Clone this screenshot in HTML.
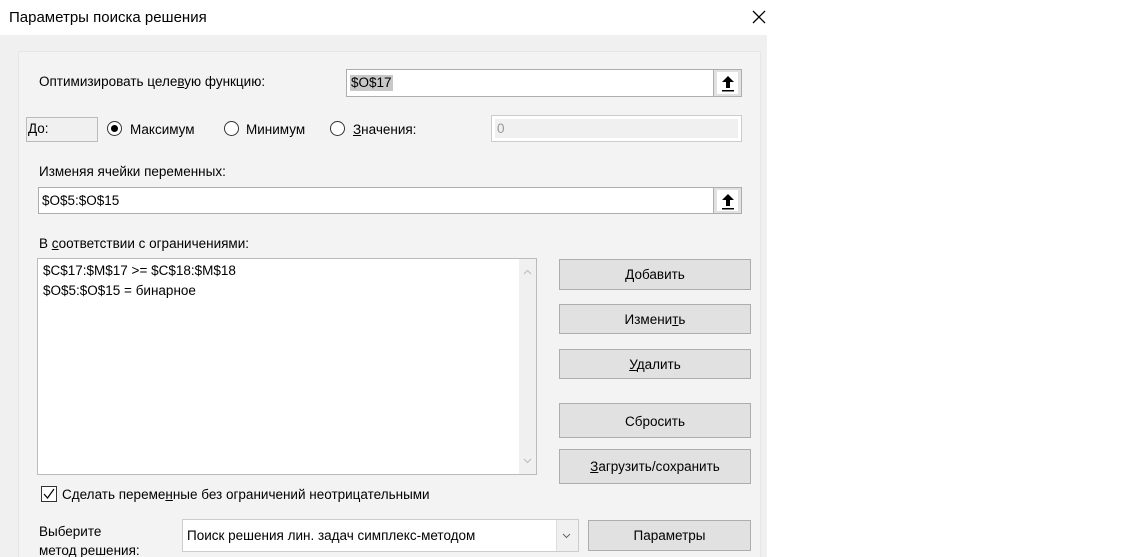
<!DOCTYPE html>
<html><head><meta charset="utf-8"><style>
*{box-sizing:border-box;margin:0;padding:0}
html{overflow:hidden;width:1124px;height:557px}
body{width:1124px;height:557px;background:#fff;position:relative;overflow:hidden;font-family:"Liberation Sans",sans-serif;font-size:13.5px;color:#000}
.a{position:absolute}
.t{position:absolute;white-space:nowrap;line-height:16px}
.inp{position:absolute;background:#fff;border:1px solid #adadad}
.btn{position:absolute;background:#e1e1e1;border:1px solid #adadad;text-align:center}
.up{position:absolute;background:#e1e1e1;border-left:1px solid #adadad;top:0;right:0;bottom:0;width:28px}
.up div{position:absolute;left:3px;top:2px;right:3px;bottom:2px;background:#fff}
.rad{position:absolute;width:15px;height:15px;border:1px solid #333;border-radius:50%;background:#fff}
u{text-decoration:underline}
</style></head><body>
<div class="t" style="left:9px;top:10px;font-size:15px">Параметры поиска решения</div>
<svg class="a" style="left:752px;top:10px" width="14" height="14"><path d="M1 1L13 13M13 1L1 13" stroke="#000" stroke-width="1.3"/></svg>
<div class="a" style="left:0;top:35px;width:767px;height:522px;background:#f0f0f0"></div>
<div class="a" style="left:18px;top:51px;width:743px;height:506px;border:1px solid #e6e6e6;border-bottom:none;background:#f3f3f3"></div>

<div class="t" style="left:39px;top:74px">Оптимизировать целе<u>в</u>ую функцию:</div>
<div class="inp" style="left:346px;top:69px;width:396px;height:28px">
<span class="t" style="left:3px;top:5px;background:#c8c8c8;padding:0 1px">$O$17</span>
<div class="up"><div><svg width="22" height="22" style="position:absolute;left:0;top:0"><path d="M11 4L5 10H9V16H13V10H17Z" fill="#000"/><rect x="5" y="18" width="12" height="1.5" fill="#000"/></svg></div></div></div>

<div class="a" style="left:26px;top:117px;width:72px;height:25px;border:1px solid #bbb;background:#f0f0f0"></div>
<div class="t" style="left:28px;top:121px">До:</div>
<div class="rad" style="left:107px;top:121px"><div style="position:absolute;left:3px;top:3px;width:7px;height:7px;border-radius:50%;background:#000"></div></div>
<div class="t" style="left:130px;top:122px">Максимум</div>
<div class="rad" style="left:224px;top:121px"></div>
<div class="t" style="left:246px;top:122px">Минимум</div>
<div class="rad" style="left:330px;top:121px"></div>
<div class="t" style="left:353px;top:122px"><u>З</u>начения:</div>
<div class="inp" style="left:491px;top:115px;width:251px;height:27px;border-color:#ccc"><div class="a" style="left:3px;top:3px;right:3px;bottom:3px;background:#f0f0f0"></div><span class="t" style="left:5px;top:5px;color:#999">0</span></div>

<div class="t" style="left:39px;top:164px">Изменяя ячейки переменных:</div>
<div class="inp" style="left:38px;top:187px;width:704px;height:27px">
<span class="t" style="left:3px;top:5px">$O$5:$O$15</span>
<div class="up"><div><svg width="22" height="22" style="position:absolute;left:0;top:0"><path d="M11 4L5 10H9V16H13V10H17Z" fill="#000"/><rect x="5" y="18" width="12" height="1.5" fill="#000"/></svg></div></div></div>

<div class="t" style="left:39px;top:236px">В <u>с</u>оответствии с ограничениями:</div>
<div class="inp" style="left:37px;top:258px;width:500px;height:217px;border-color:#bbb">
<span class="t" style="left:5px;top:4px">$C$17:$M$17 &gt;= $C$18:$M$18</span>
<span class="t" style="left:5px;top:24px">$O$5:$O$15 = бинарное</span>
<div class="a" style="right:0;top:0;bottom:0;width:17px;background:#f0f0f0"></div>
<svg class="a" style="right:4px;top:10px" width="9" height="6"><path d="M1 5L4.5 1.5L8 5" stroke="#bbb" fill="none"/></svg>
<svg class="a" style="right:4px;bottom:10px" width="9" height="6"><path d="M1 1L4.5 4.5L8 1" stroke="#bbb" fill="none"/></svg>
</div>

<div class="btn" style="left:559px;top:259px;width:192px;height:31px;line-height:29px"><u>Д</u>обавить</div>
<div class="btn" style="left:559px;top:304px;width:192px;height:30px;line-height:30px">Измени<u>т</u>ь</div>
<div class="btn" style="left:559px;top:349px;width:192px;height:30px;line-height:30px"><u>У</u>далить</div>
<div class="btn" style="left:559px;top:403px;width:192px;height:35px;line-height:35px">Сбросить</div>
<div class="btn" style="left:559px;top:449px;width:192px;height:35px;line-height:34px"><u>З</u>агрузить/сохранить</div>

<div class="a" style="left:41px;top:486px;width:16px;height:16px;border:1px solid #333;background:#fff"><svg width="14" height="14" style="position:absolute;left:0;top:0"><path d="M2 7L5.5 11L12 2" stroke="#000" fill="none" stroke-width="1.2"/></svg></div>
<div class="t" style="left:62px;top:487px">Сделать переме<u>н</u>ные без ограничений неотрицательными</div>

<div class="t" style="left:39px;top:524px">Выберите</div>
<div class="t" style="left:39px;top:543px">метод решения:</div>
<div class="inp" style="left:182px;top:519px;width:397px;height:33px;border-color:#ccc">
<span class="t" style="left:4px;top:8px">Поиск решения лин. задач симплекс-методом</span>
<div class="a" style="right:0;top:0;bottom:0;width:22px;background:#f0f0f0;border-left:1px solid #ddd"></div>
<svg class="a" style="right:7px;top:13px" width="9" height="6"><path d="M1 1L4.5 4.5L8 1" stroke="#666" fill="none"/></svg>
</div>
<div class="btn" style="left:588px;top:520px;width:163px;height:31px;line-height:30px">Параметры</div>
</body></html>
